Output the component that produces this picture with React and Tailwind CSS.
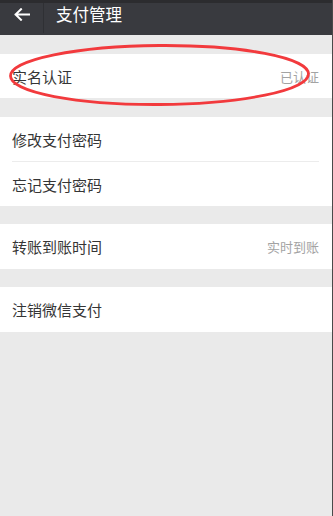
import React from "react";

function Row({ label, value, tall }) {
  return (
    <div className={`${tall ? "h-[45px]" : "h-[44px]"} flex items-center justify-between pl-[12px] pr-[13px]`}>
      <span className="text-[15px] text-[#353535] leading-none">{label}</span>
      {value ? <span className="text-[13px] text-[#a3a3a3] leading-none">{value}</span> : null}
    </div>
  );
}

export default function App() {
  return (
    <div
      className="relative w-[333px] h-[516px] bg-[#eaeaea] border-r border-[#4a4a4a] overflow-hidden"
      style={{ fontFamily: '"Noto Sans CJK SC", "Noto Sans", sans-serif' }}
    >
      <div className="h-[35px] bg-[#393a3f] border-t-[3px] border-[#2c2c2f] flex items-start">
        <div className="w-[43px] h-[23px] flex items-center justify-center">
          <svg width="16" height="13" viewBox="0 0 16 13" fill="none">
            <path d="M15 6.5H1.8M7 1.2L1.6 6.5L7 11.8" stroke="#ffffff" strokeWidth="2" strokeLinecap="square" strokeLinejoin="miter" />
          </svg>
        </div>
        <div className="w-px h-[30px] bg-[#2f3034]" />
        <div className="h-[23px] flex items-center pl-[12px] text-white text-[16.5px] leading-none">支付管理</div>
      </div>

      <div className="mt-[19px] bg-white">
        <Row label="实名认证" value="已认证" />
      </div>

      <div className="mt-[19px] bg-white">
        <Row label="修改支付密码" />
        <div className="mx-[12px] mr-[13px] h-px bg-[#ececec]" />
        <Row label="忘记支付密码" />
      </div>

      <div className="mt-[18px] bg-white">
        <Row label="转账到账时间" value="实时到账" tall />
      </div>

      <div className="mt-[18px] bg-white">
        <Row label="注销微信支付" tall />
      </div>

      <svg className="absolute left-0 top-0 pointer-events-none" width="333" height="516" viewBox="0 0 333 516">
        <ellipse cx="159.5" cy="75" rx="149" ry="29.5" fill="none" stroke="#f23a3d" strokeWidth="2.8" transform="rotate(-0.4 159.5 75)" />
      </svg>
    </div>
  );
}
